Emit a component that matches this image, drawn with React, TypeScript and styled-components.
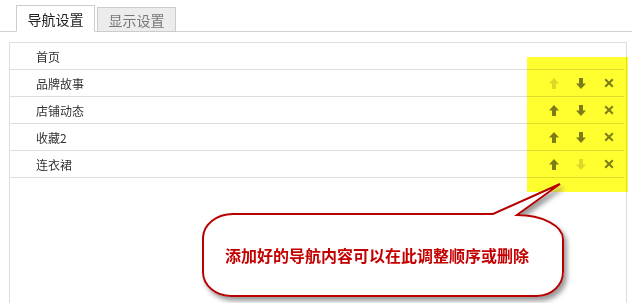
import React from "react";
import styled, { createGlobalStyle } from "styled-components";

const GlobalStyle = createGlobalStyle`
  html, body {
    margin: 0;
    padding: 0;
    background: #ffffff;
  }
  body {
    font-family: "Noto Sans CJK SC", "Noto Sans", sans-serif;
    color: #333333;
  }
`;

const Page = styled.div`
  position: relative;
  width: 639px;
  height: 303px;
  overflow: hidden;
  padding-top: 5px;
  box-sizing: border-box;
`;

const TabBar = styled.div`
  display: flex;
  align-items: flex-end;
  gap: 2px;
  width: 632px;
  height: 27px;
  padding-left: 16px;
  box-sizing: border-box;
  border-bottom: 1px solid #d0d0d0;
`;

const Tab = styled.div<{ $active?: boolean }>`
  display: flex;
  align-items: center;
  justify-content: center;
  width: 79px;
  height: ${(p) => (p.$active ? "27px" : "25px")};
  margin-bottom: -1px;
  box-sizing: border-box;
  border: 1px solid #cccccc;
  border-bottom-color: ${(p) => (p.$active ? "#ffffff" : "#cccccc")};
  background: ${(p) => (p.$active ? "#ffffff" : "#ececec")};
  color: ${(p) => (p.$active ? "#222222" : "#777777")};
  font-size: 14px;
  line-height: 1;
`;

const Panel = styled.div`
  margin: 10px 0 0 9px;
  width: 618px;
  height: 270px;
  box-sizing: border-box;
  border: 1px solid #dddddd;
`;

const Row = styled.div`
  display: flex;
  align-items: center;
  height: 27px;
  margin-right: 2px;
  padding-left: 26px;
  box-sizing: border-box;
  border-bottom: 1px solid #dddddd;
  font-size: 12px;
`;

const RowName = styled.span`
  flex: 1;
`;

const Actions = styled.div`
  display: flex;
  align-items: center;
  height: 100%;
`;

const ActionCell = styled.span<{ $wide?: boolean }>`
  display: flex;
  align-items: center;
  justify-content: center;
  width: ${(p) => (p.$wide ? "30px" : "27px")};
  height: 100%;
`;

const Highlight = styled.div`
  position: absolute;
  left: 527px;
  top: 57px;
  width: 101px;
  height: 135px;
  background: #ffff30;
  mix-blend-mode: multiply;
  pointer-events: none;
`;

const Callout = styled.div`
  position: absolute;
  left: 196px;
  top: 180px;
  width: 380px;
  height: 123px;
`;

const CalloutShape = styled.svg`
  position: absolute;
  left: 0;
  top: 0;
`;

const CalloutText = styled.div`
  position: absolute;
  left: 7px;
  top: 34px;
  width: 360px;
  height: 82px;
  display: flex;
  align-items: center;
  justify-content: center;
  padding-right: 12px;
  box-sizing: border-box;
  font-size: 16px;
  font-weight: bold;
  color: #c40000;
`;

const ON = "#7c7c7c";
const OFF = "#dadada";

const UpArrow = ({ on }: { on: boolean }) => (
  <svg width="10" height="11" viewBox="0 0 10 11">
    <polygon points="5,0 10,5.5 7,5.5 7,11 3,11 3,5.5 0,5.5" fill={on ? ON : OFF} />
  </svg>
);

const DownArrow = ({ on }: { on: boolean }) => (
  <svg width="10" height="11" viewBox="0 0 10 11">
    <polygon points="3,0 7,0 7,5.5 10,5.5 5,11 0,5.5 3,5.5" fill={on ? ON : OFF} />
  </svg>
);

const Cross = () => (
  <svg width="10" height="10" viewBox="0 0 10 10">
    <path d="M1.2 1.2 L8.8 8.8 M8.8 1.2 L1.2 8.8" stroke={ON} strokeWidth="2" />
  </svg>
);

type Item = { name: string; actions: boolean; up?: boolean; down?: boolean };

const items: Item[] = [
  { name: "首页", actions: false },
  { name: "品牌故事", actions: true, up: false, down: true },
  { name: "店铺动态", actions: true, up: true, down: true },
  { name: "收藏2", actions: true, up: true, down: true },
  { name: "连衣裙", actions: true, up: true, down: false },
];

// page coords offset by callout position (196,180)
const bubblePath =
  "M 37 34 L 297 34 L 364 4 L 321 35 A 46 24 0 0 1 367 59 L 367 92 " +
  "A 26 24 0 0 1 341 116 L 35 116 A 28 24 0 0 1 7 92 L 7 58 A 30 24 0 0 1 37 34 Z";

export default function App() {
  return (
    <Page>
      <GlobalStyle />
      <TabBar>
        <Tab $active>导航设置</Tab>
        <Tab>显示设置</Tab>
      </TabBar>
      <Panel>
        {items.map((it) => (
          <Row key={it.name}>
            <RowName>{it.name}</RowName>
            {it.actions && (
              <Actions>
                <ActionCell>
                  <UpArrow on={!!it.up} />
                </ActionCell>
                <ActionCell>
                  <DownArrow on={!!it.down} />
                </ActionCell>
                <ActionCell $wide>
                  <Cross />
                </ActionCell>
              </Actions>
            )}
          </Row>
        ))}
      </Panel>
      <Highlight />
      <Callout>
        <CalloutShape width="380" height="123" viewBox="0 0 380 123">
          <defs>
            <filter id="bubbleShadow" x="-10%" y="-10%" width="130%" height="140%">
              <feDropShadow dx="3" dy="4" stdDeviation="2.5" floodColor="#777777" floodOpacity="0.75" />
            </filter>
          </defs>
          <path
            d={bubblePath}
            fill="#ffffff"
            stroke="#b80000"
            strokeWidth="2"
            filter="url(#bubbleShadow)"
          />
        </CalloutShape>
        <CalloutText>添加好的导航内容可以在此调整顺序或删除</CalloutText>
      </Callout>
    </Page>
  );
}
